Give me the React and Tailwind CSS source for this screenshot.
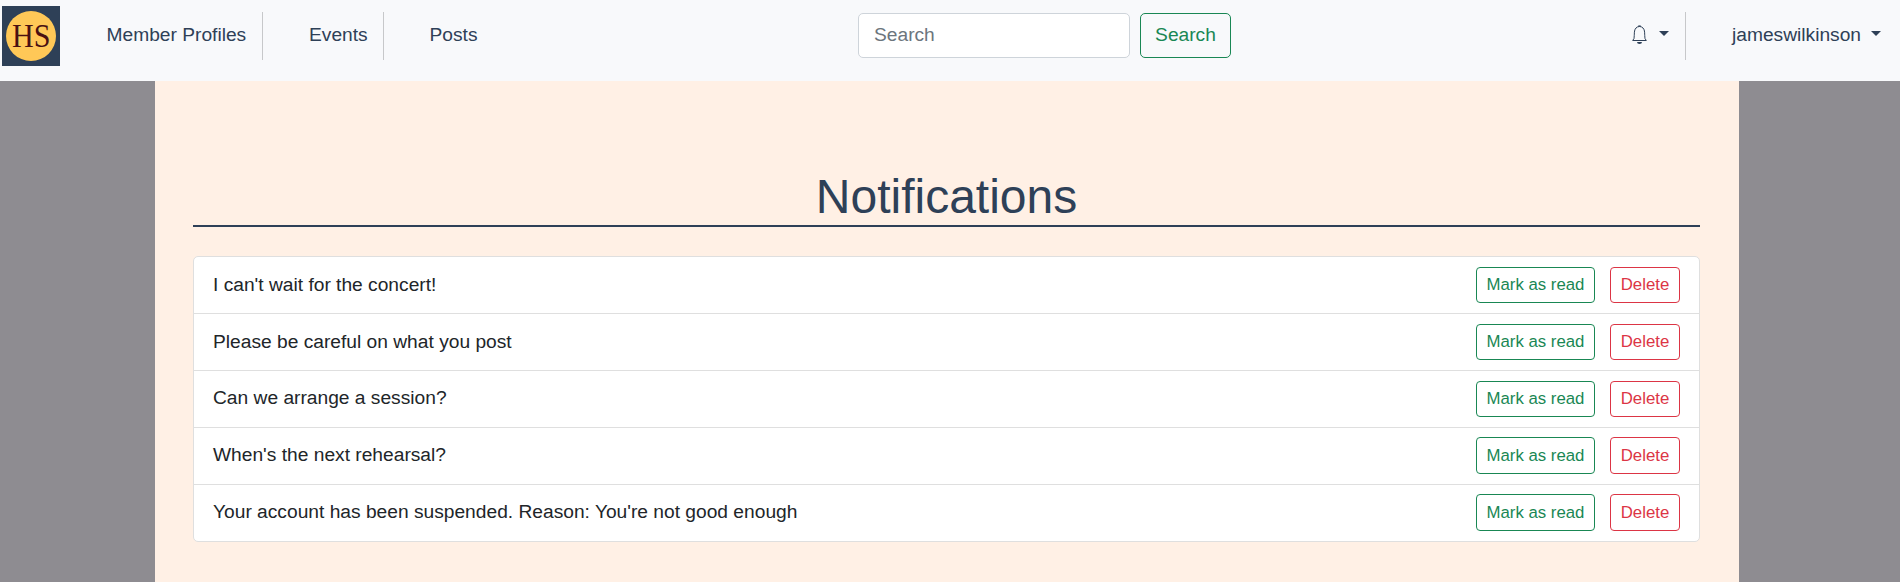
const items = [
  { text: "I can't wait for the concert!", top: "pt-[10px]", label: "mt-[3px]", btn: "h-9 leading-[34px]" },
  { text: "Please be careful on what you post", top: "pt-[10px]", label: "mt-[3px]", btn: "h-9 leading-[34px]" },
  { text: "Can we arrange a session?", top: "pt-[10px]", label: "mt-[2px]", btn: "h-9 leading-[34px]" },
  { text: "When's the next rehearsal?", top: "pt-[9px]", label: "mt-[3px]", btn: "h-[37px] leading-[36px]" },
  { text: "Your account has been suspended. Reason: You're not good enough", top: "pt-[9px]", label: "mt-[3px]", btn: "h-[37px] leading-[36px]" },
];

function Caret({ className }) {
  return (
    <svg className={className} width="10" height="5" viewBox="0 0 10 5" fill="currentColor">
      <path d="M0 0h10L5 5z" />
    </svg>
  );
}

function Bell() {
  return (
    <svg className="mt-[25px] h-[19px] w-[17px]" viewBox="0 0 17 19" fill="none" stroke="currentColor">
      <path d="M3 13.5C3.2 11.5 3.3 10 3.4 7.2C3.5 3.6 5.8 1.5 8.5 1.5S13.500 3.600 13.600 7.200C13.700 10 13.800 11.500 14 13.500L15.300 15.500H1.700z" strokeWidth="1" />
      <path d="M7.300 .4h2.400v1.400H7.300z" fill="currentColor" stroke="none" />
      <path d="M6 17h5a2.500 2 0 0 1-5 0z" fill="currentColor" stroke="none" />
    </svg>
  );
}

function Logo() {
  return (
    <svg className="mt-1.5 ml-0.5 h-[60px] w-[58px] shrink-0" viewBox="0 0 58 60">
      <rect width="58" height="60" fill="#2e4057" />
      <circle cx="29" cy="30" r="25" fill="#ffc857" />
      <text x="29.3" y="40.7" textAnchor="middle" textLength="38.5" lengthAdjust="spacingAndGlyphs" fontFamily="Liberation Serif, serif" fontSize="33" fill="#4a1012">
        HS
      </text>
    </svg>
  );
}

export default function App() {
  return (
    <div className="flex h-[582px] w-full flex-col overflow-hidden bg-[#8e8c91] font-['Liberation_Sans',Arial,sans-serif] text-[19.2px] text-[#212529]">
      <header className="flex h-[81px] shrink-0 items-start bg-[#f8f9fb] text-[#2e4057]">
        <Logo />
        <nav className="flex w-[798px] pt-3 leading-[46px]">
          <a className="h-12 w-[203px] border-r border-[#c7c8ca] pl-[46.500px]">Member Profiles</a>
          <a className="h-12 w-[121px] border-r border-[#c7c8ca] pl-[46px]">Events</a>
          <a className="h-12 pl-[45.500px]">Posts</a>
        </nav>
        <form className="flex gap-[10px] pt-[13px]">
          <input
            className="h-[45px] w-[272px] rounded-[5px] border border-[#ced4da] bg-white px-[15px] pb-[2px] outline-none placeholder:text-[#6c757d]"
            placeholder="Search"
          />
          <button type="button" className="h-[45px] w-[91px] rounded-[5px] border border-[#198754] pb-[1px] text-[#198754]">
            Search
          </button>
        </form>
        <div className="ml-auto flex">
          <div className="flex">
            <Bell />
            <Caret className="mt-[31px] ml-[11px]" />
          </div>
          <div className="mt-3 ml-4 h-12 w-px bg-[#c7c8ca]" />
          <div className="flex pr-[19px]">
            <span className="mt-3 ml-[46px] leading-[46px]">jameswilkinson</span>
            <Caret className="mt-[31px] ml-[10px]" />
          </div>
        </div>
      </header>
      <main className="ml-[155px] w-[1584px] grow bg-[#fff0e5] pr-[39px] pl-[38px]">
        <h1 className="h-[146px] border-b-2 border-[#2e4057] pt-[87px] text-center text-[48px] leading-[57px] text-[#2e4057]">
          Notifications
        </h1>
        <ul className="mt-[29px] rounded-[5px] border border-[#dfdfdf] bg-white">
          {items.map((item, i) => (
            <li
              key={item.text}
              className={`flex items-start justify-between pr-[19px] pl-[19px] ${item.top} ${i < 4 ? "h-[57px] border-b border-[#dfdfdf]" : "h-[56px]"}`}
            >
              <span className={`leading-[29px] ${item.label}`}>{item.text}</span>
              <div className="flex gap-[15px] text-[16.8px]">
                <button type="button" className={`w-[119px] rounded-[4px] border border-[#198754] text-[#198754] ${item.btn}`}>
                  Mark as read
                </button>
                <button type="button" className={`w-[70px] rounded-[4px] border border-[#dc3545] text-[#dc3545] ${item.btn}`}>
                  Delete
                </button>
              </div>
            </li>
          ))}
        </ul>
      </main>
    </div>
  );
}
